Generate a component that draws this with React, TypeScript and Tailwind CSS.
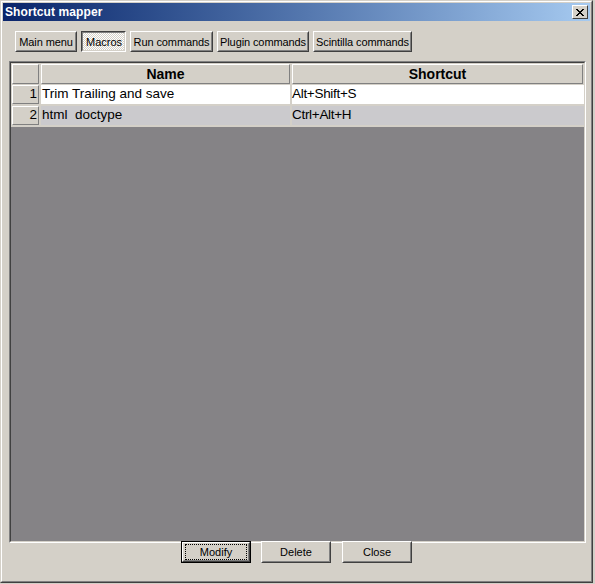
import React from 'react';

const tabs = [
  { label: 'Main menu', w: 'w-[62px]' },
  { label: 'Macros', w: 'w-[45px]' },
  { label: 'Run commands', w: 'w-[83px]' },
  { label: 'Plugin commands', w: 'w-[92px]' },
  { label: 'Scintilla commands', w: 'w-[99px]' },
];

const rows = [
  { id: 1, name: 'Trim Trailing and save', shortcut: 'Alt+Shift+S', bg: 'bg-white' },
  { id: 2, name: 'html  doctype', shortcut: 'Ctrl+Alt+H', bg: 'bg-[#cbcacd]' },
];

function RaisedButton({ children, className = '', focused = false }: { children: React.ReactNode; className?: string; focused?: boolean }) {
  const inner = (
    <div className="h-full border border-t-white border-l-white border-b-[#404040] border-r-[#404040]">
      <div className="h-full border border-t-[#d4d0c8] border-l-[#d4d0c8] border-b-[#808080] border-r-[#808080] flex items-center justify-center whitespace-nowrap">
        {focused ? (
          <div className="w-full h-full flex items-center justify-center border border-dotted border-black m-[1px]">{children}</div>
        ) : (
          children
        )}
      </div>
    </div>
  );
  if (focused) {
    return <div className={`border border-black ${className}`}>{inner}</div>;
  }
  return <div className={className}>{inner}</div>;
}

function PressedTab({ children, className = '' }: { children: React.ReactNode; className?: string }) {
  return (
    <div className={`h-[21px] border border-t-[#404040] border-l-[#404040] border-b-white border-r-white ${className}`}>
      <div className="h-full pt-[2px] pl-[1px] border border-t-[#808080] border-l-[#808080] border-b-[#d4d0c8] border-r-[#d4d0c8] flex items-center justify-center bg-[repeating-conic-gradient(#ffffff_0_25%,#d4d0c8_0_50%)] bg-[length:2px_2px]">
        {children}
      </div>
    </div>
  );
}

function HeaderCell({ children, className = '' }: { children?: React.ReactNode; className?: string }) {
  return (
    <div className={`bg-[#d4d0c8] border border-t-white border-l-white border-b-[#808080] border-r-[#808080] flex items-center ${className}`}>
      {children}
    </div>
  );
}

export default function App() {
  return (
    <div className="w-[595px] h-[584px] bg-[#d4d0c8] font-['Liberation_Sans',Arial,sans-serif] text-[11px] text-black overflow-hidden">
      <div className="w-[593px] h-[583px] border border-t-[#d4d0c8] border-l-[#d4d0c8] border-b-[#404040] border-r-[#404040]">
        <div className="h-full border border-t-white border-l-white border-b-[#808080] border-r-[#808080] p-[1px] flex flex-col">
          {/* Title bar */}
          <div className="h-[18px] flex items-center justify-between pl-[2px] pr-[2px] bg-gradient-to-r from-[#0a246a] to-[#a6caf0]">
            <span className="text-white font-bold text-[12px] tracking-[0.1px]">Shortcut mapper</span>
            <div className="w-[16px] h-[14px] bg-[#d4d0c8] border border-t-white border-l-white border-b-[#404040] border-r-[#404040] flex items-center justify-center">
              <svg width="8" height="7" viewBox="0 0 8 7" shapeRendering="crispEdges">
                <path d="M0 0h2v1h-2zM6 0h2v1h-2zM1 1h2v1h-2zM5 1h2v1h-2zM2 2h4v1h-4zM3 3h2v1h-2zM2 4h4v1h-4zM1 5h2v1h-2zM5 5h2v1h-2zM0 6h2v1h-2zM6 6h2v1h-2z" fill="#000" />
              </svg>
            </div>
          </div>

          {/* Tabs */}
          <div className="flex gap-[4px] pl-[12px] mt-[10px]">
            {tabs.map((t) =>
              t.label === 'Macros' ? (
                <PressedTab key={t.label} className={t.w}>{t.label}</PressedTab>
              ) : (
                <RaisedButton key={t.label} className={`h-[21px] ${t.w}`}>
                  <span className="pt-[1px] tracking-[-0.1px]">{t.label}</span>
                </RaisedButton>
              )
            )}
          </div>

          {/* Grid */}
          <div className="ml-[6px] mt-[9px] w-[577px] h-[482px] border border-t-[#808080] border-l-[#808080] border-b-white border-r-white">
            <div className="h-full border border-t-[#404040] border-l-[#404040] border-b-[#d4d0c8] border-r-[#d4d0c8] bg-[#858386] text-[13.5px]">
              <div className="flex gap-[2px] bg-[#d4d0c8] pb-[1px] pl-[1px] pt-[1px]">
                <HeaderCell className="w-[27px] h-[20px]" />
                <HeaderCell className="w-[249px] h-[20px] justify-center font-bold text-[14px]">Name</HeaderCell>
                <HeaderCell className="flex-1 h-[20px] justify-center font-bold text-[14px] mr-[1px]">Shortcut</HeaderCell>
              </div>
              {rows.map((r) => (
                <div key={r.id} className="flex gap-[2px] bg-[#d4d0c8] pb-[2px] pl-[1px]">
                  <HeaderCell className="w-[27px] h-[19px] justify-end pr-[1px]">{r.id}</HeaderCell>
                  <div className={`w-[249px] h-[19px] ${r.bg} flex items-center pl-[1px] whitespace-pre`}>{r.name}</div>
                  <div className={`flex-1 h-[19px] ${r.bg} flex items-center pl-[0px] tracking-[-0.3px]`}>{r.shortcut}</div>
                </div>
              ))}
            </div>
          </div>

          {/* Buttons */}
          <div className="flex pl-[178px] -mt-[2px]">
            <RaisedButton focused className="w-[70px] h-[22px]">
              Modify
            </RaisedButton>
            <RaisedButton className="w-[70px] h-[22px] ml-[10px]">Delete</RaisedButton>
            <RaisedButton className="w-[70px] h-[22px] ml-[11px]">Close</RaisedButton>
          </div>
        </div>
      </div>
    </div>
  );
}
